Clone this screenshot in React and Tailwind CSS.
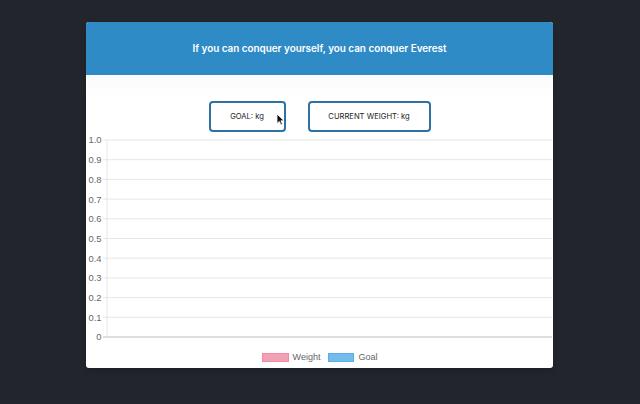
import React from "react";

const ticks = ["1.0", "0.9", "0.8", "0.7", "0.6", "0.5", "0.4", "0.3", "0.2", "0.1", "0"];

function Chart() {
  const top = 10;
  const step = 19.7;
  return (
    <svg width="467" height="212" className="block" style={{ fontFamily: "'Liberation Sans', Arial, sans-serif" }}>
      {ticks.map((t, i) => {
        const y = top + i * step;
        const last = i === ticks.length - 1;
        return (
          <g key={t}>
            <line x1="17" x2="466" y1={y} y2={y} stroke={last ? "#bdbdbd" : "#e6e6e6"} strokeWidth="1" />
            <text x="15.5" y={y + 3.4} textAnchor="end" fontSize="9.4" fill="#666">{t}</text>
          </g>
        );
      })}
      <line x1="21" x2="21" y1={top} y2={top + 10 * step} stroke="#e6e6e6" strokeWidth="1" />
    </svg>
  );
}

export default function App() {
  return (
    <div className="w-[640px] h-[404px] bg-[#22252c] pt-[22px] pl-[86px]" style={{ fontFamily: "Inter, 'Liberation Sans', sans-serif" }}>
      <div className="w-[467px] h-[346px] bg-white rounded-[3px] overflow-hidden flex flex-col shadow-md">
        <div className="h-[53px] bg-[#2f8bc6] flex items-center justify-center">
          <span className="text-white text-[9.9px] font-semibold">If you can conquer yourself, you can conquer Everest</span>
        </div>
        <div className="h-[26px] bg-gradient-to-b from-[#fafbfc] to-white" />
        <div className="flex justify-center gap-[22px] relative">
          <div className="relative w-[77px] h-[31px] border-2 border-[#2c72a6] rounded-[4px] flex items-center justify-center text-[7.6px] text-[#222]">
            GOAL: kg
            <svg className="absolute left-[65px] top-[10px]" width="9" height="13" viewBox="0 0 9 13">
              <path d="M1 1 L1 10.5 L3.3 8.4 L5 12 L6.5 11.3 L4.9 7.8 L8 7.8 Z" fill="#111" stroke="#fff" strokeWidth="0.8" />
            </svg>
          </div>
          <div className="w-[123px] h-[31px] border-2 border-[#2c72a6] rounded-[4px] flex items-center justify-center text-[7.6px] text-[#222]">
            CURRENT WEIGHT: kg
          </div>
        </div>
        <div className="mt-[-2px]">
          <Chart />
        </div>
        <div className="flex justify-center items-center gap-[4px] mt-[9px] text-[9px] text-[#666]" style={{ fontFamily: "'Liberation Sans', Arial, sans-serif" }}>
          <div className="w-[27px] h-[9px] bg-[#f2a1b5] border border-[#ee8aa3]" />
          <span className="mr-[4px]">Weight</span>
          <div className="w-[26px] h-[9px] bg-[#73bbea] border border-[#5aaee3]" />
          <span>Goal</span>
        </div>
      </div>
    </div>
  );
}
